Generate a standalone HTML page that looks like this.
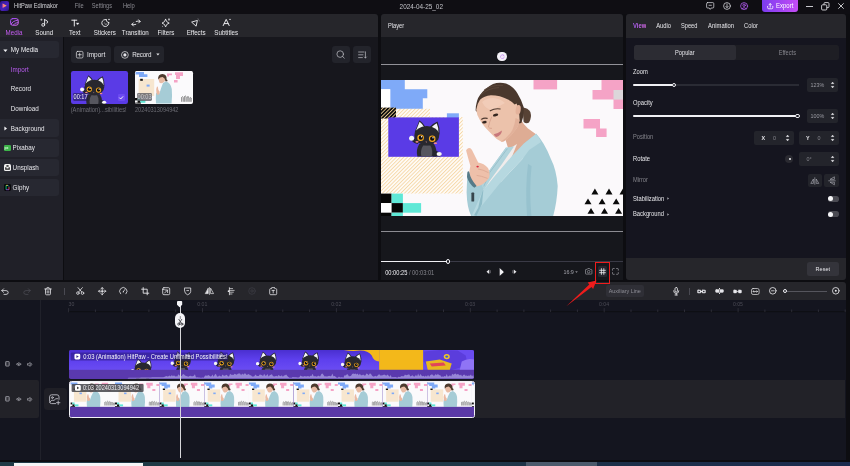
<!DOCTYPE html>
<html><head><meta charset="utf-8">
<style>
*{margin:0;padding:0;box-sizing:border-box}
html,body{width:850px;height:466px;overflow:hidden;background:#0d0d11}
body{position:relative;font-family:"Liberation Sans","DejaVu Sans",sans-serif;font-size:6.5px;color:#e8e8ec;line-height:1}
.a{position:absolute}
.t{position:absolute;white-space:nowrap;line-height:8px;height:8px;transform:scaleY(1.13);transform-origin:50% 72%}
.g{color:#8b8b92}
.btn{position:absolute;background:#23242b;border-radius:3px}
svg{position:absolute;overflow:visible}
/* title */
#title{left:0;top:0;width:850px;height:14px;background:#0f0e13}
/* toolbar */
#tb{left:0;top:14px;width:378px;height:23px;background:#26262b;border-radius:0 3px 0 0}
.tbl{position:absolute;top:28.5px;width:40px;text-align:center;font-size:6.2px;line-height:8px;color:#e8e8ec;transform:scaleY(1.14);transform-origin:50% 75%}
/* sidebar */
#side{left:0;top:37px;width:63px;height:242.8px;background:#202028}
.si{position:absolute;left:0;width:58.9px;height:17.6px;background:#272831;border-radius:0 3px 3px 0}
/* media */
#media{left:64px;top:37px;width:314px;height:242.8px;background:#17171d}
/* player */
#ph{left:381px;top:14px;width:242px;height:23.4px;background:#26262b;border-radius:3px 3px 0 0}
#pb{left:381px;top:37.4px;width:242px;height:242.4px;background:#16171c}
/* right */
#rh{left:626px;top:14px;width:220px;height:23.8px;background:#26262b;border-radius:3px 3px 0 0}
#rb{left:626px;top:37.8px;width:220px;height:220.4px;background:#15151f}
#rf{left:626px;top:258px;width:220px;height:21.8px;background:#26262b;border-radius:0 0 3px 3px}
.box{position:absolute;background:#23242b;border-radius:2px}
/* timeline */
#tt{left:0;top:281.7px;width:845.5px;height:17.9px;background:#26262b;border-radius:0 3px 0 0}
#tl{left:0;top:299.5px;width:846px;height:160.2px;background:#14151f}
#tlc{left:0;top:299.5px;width:40.6px;height:160.2px;background:#14151f;border-right:0.8px solid #20212a}
</style></head><body>
<div id="wrap" style="position:absolute;left:0;top:0;width:850px;height:466px;will-change:transform">
<svg width="0" height="0" style="left:0;top:0">
<defs>
<pattern id="hatch" width="2.6" height="2.6" patternUnits="userSpaceOnUse" patternTransform="rotate(-45)"><rect width="2.6" height="2.6" fill="#fffcf8"/><rect width="2.6" height="0.95" fill="#f5d8a8"/></pattern>
<pattern id="hatchb" width="2.6" height="2.6" patternUnits="userSpaceOnUse" patternTransform="rotate(-45)"><rect width="2.6" height="2.6" fill="#0a0a0a"/><rect width="2.6" height="0.9" fill="#e8c88e"/></pattern>
<symbol id="cat" viewBox="0 0 34 37">
<path d="M5.6 12.4 L10.4 0.2 Q14.4 2.8 16.8 7.4 Z" fill="#25262e"/><path d="M7 10.8 L10.6 1.8 Q13.4 4 15 7 Z" fill="#f4f4f6"/>
<path d="M20.2 7.4 Q24.4 3.2 28.5 1.6 Q31.2 8 30.6 14.8 Z" fill="#25262e"/><path d="M22.2 7.6 Q25.2 4.4 27.7 3.2 Q29.8 8 29.4 12.8 Z" fill="#f4f4f6"/>
<path d="M9 24 Q4.6 23.4 2.2 20 L4.4 17.6 Q6.6 20.4 9.6 20.8 Z" fill="#25262e"/>
<circle cx="2.6" cy="18.2" r="2.5" fill="#f6f6f8"/>
<path d="M8.4 36.6 Q6.6 30 10.2 24 L25 24 Q28.6 30 27.2 36.6 Z" fill="#2a2a30"/>
<path d="M12.4 36.6 Q11 30 14.2 25.4 L21.4 25.4 Q24.2 30 22.6 36.6 Z" fill="#56565e"/>
<path d="M24 31 Q29 30 32.6 35 L31 36.6 L24 36.6 Z" fill="#25262e"/>
<ellipse cx="30.2" cy="34" rx="2.6" ry="1.9" fill="#f6f6f8"/>
<ellipse cx="17.8" cy="15.6" rx="12.4" ry="9.6" fill="#28282e"/>
<circle cx="11.6" cy="17.8" r="3.3" fill="#f4a81c"/><circle cx="11.8" cy="17.7" r="2.1" fill="#0c0c10"/><circle cx="12.6" cy="16.8" r="0.7" fill="#fff"/>
<circle cx="23.2" cy="18.8" r="3.3" fill="#f4a81c"/><circle cx="23.2" cy="18.7" r="2.1" fill="#0c0c10"/><circle cx="24" cy="17.8" r="0.7" fill="#fff"/>
<ellipse cx="8" cy="21.8" rx="1.6" ry="0.9" fill="#f08a8a"/><ellipse cx="26.4" cy="23.2" rx="1.6" ry="0.9" fill="#f08a8a"/>
<path d="M16.6 21.6 L18 21.8 L17.2 22.7 Z" fill="#f0a0a0"/>
</symbol>
<symbol id="scene" viewBox="0 0 242 136" preserveAspectRatio="none">
<rect width="242" height="136" fill="#fbf9fb"/>
<path d="M0 0 H23.8 V9.3 H46.3 V18.3 H41.8 V31.8 H9.2 V9.3 H0 Z" fill="#7faaf8"/>
<rect x="0" y="9.3" width="9.2" height="18.4" fill="#ffffff"/>
<path d="M0 28.8 H49 V37 H81.8 V113.6 H0 Z" fill="url(#hatch)"/>
<rect x="0" y="27.6" width="15" height="11" fill="url(#hatchb)"/>
<rect x="65.9" y="33.3" width="12" height="5" fill="#7faaf8"/>
<rect x="7.3" y="37.4" width="70.6" height="39.4" fill="#5a3be6"/>
<use href="#cat" x="28" y="40" width="34" height="37"/>
<rect x="0" y="113.6" width="10.6" height="9.5" fill="#060606"/><rect x="10.6" y="113.6" width="11.3" height="9.5" fill="#5fe8d6"/>
<rect x="0" y="123.1" width="10.6" height="9.6" fill="#ffffff"/><rect x="10.6" y="123.1" width="11.3" height="9.6" fill="#060606"/><rect x="21.9" y="123.1" width="18.2" height="9.6" fill="#5fe8d6"/>
<rect x="0" y="132.7" width="10.6" height="3.3" fill="#060606"/><rect x="10.6" y="132.7" width="11.3" height="3.3" fill="#5fe8d6"/>
<rect x="152.5" y="0" width="23.6" height="9.4" fill="#f5a3c6"/>
<path d="M220.5 0 H242 V28.9 H232.5 V19.6 H211.5 V10 H220.5 Z" fill="#f5a3c6"/><rect x="232.5" y="10" width="9.5" height="9.6" fill="#dcd6da"/>
<path d="M202.5 39.1 H219 V48.4 H225.6 V57.1 H215.1 V48.4 H202.5 Z" fill="#f5a3c6"/>
<g fill="#0a0a0a"><path d="M210.4 114.4 L213.9 108.4 L217.4 114.4 Z M224.5 114.4 L228 108.4 L231.5 114.4 Z M238.5 114.4 L242 108.4 V114.4 Z"/><path d="M203.5 124.2 L207 118.4 L210.5 124.2 Z M217.6 124.2 L221.1 118.4 L224.6 124.2 Z M231.7 124.2 L235.2 118.4 L238.7 124.2 Z"/><path d="M206.5 133.8 L210 127.9 L213.5 133.8 Z M220 133.8 L223.5 127.9 L227 133.8 Z M234.1 133.8 L237.6 127.9 L241.1 133.8 Z"/></g>
<!-- woman -->
<path d="M141.6 27.4 Q147 27.8 149.4 32 Q151 37.6 148 42.4 Q145.6 44.2 142.6 42 Z" fill="#574235"/>
<path d="M124 58 L136 44 L139 38 Q142 44 147 48.4 L155.4 54.4 L143 66 L131 80 L127 68 Z" fill="#deac94"/>
<path d="M94.6 30.4 Q95 20 99 15 Q104 8 112 4 Q118 1.6 125 3.4 Q132 6 136.5 13.5 Q140.6 20 142.8 27.4 L142.4 36 L140.4 43 L134 44 L120 40 L100 36 Z" fill="#4a382d"/>
<path d="M95.2 29.8 Q96 24 99 19.8 Q103 15.8 110 15.2 Q119 15.2 127 19.6 Q131 21.8 133.6 24.4 L135.6 23.4 Q138.2 29 138.6 40 Q137.6 47 134 50.4 Q130 56 125.4 59.4 Q122.4 62.2 120 61.6 Q116 60 113 56.6 L106.6 50 Q101 44 98.6 39.4 Q95.6 34.6 95.2 29.8 Z" fill="#ecc2ab"/>
<path d="M101 22 Q106 17.6 113 18 Q120 19 124 23 Q118 26 112 30 Q105 30 101 22 Z" fill="#f3d0bd" opacity="0.7"/>
<ellipse cx="137.2" cy="29.8" rx="2.5" ry="4.8" fill="#e4b29b" transform="rotate(8 137.2 29.8)"/>
<path d="M134 50.4 Q130 56 125.4 59.4 Q122.4 62.2 120 61.6 Q127 57.6 131.4 50 Q134 44 134.6 38 L138.6 40 Q137.6 47 134 50.4 Z" fill="#e2b19a"/>
<path d="M112.8 54.2 Q117 53.6 121 50.6 Q120.4 55.6 115.6 57 Q113.6 56.6 112.8 54.2 Z" fill="#c8777b"/>
<path d="M100.6 39.2 Q103 37.6 106.2 38.4 M109.2 30.8 Q114 28 119.2 29" stroke="#4e3a30" stroke-width="1.1" fill="none" stroke-linecap="round"/>
<ellipse cx="103.4" cy="42.2" rx="2.3" ry="1.3" fill="#33251f" transform="rotate(-8 103.4 42.2)"/>
<ellipse cx="114.6" cy="35" rx="2.7" ry="1.4" fill="#33251f" transform="rotate(-14 114.6 35)"/>
<path d="M110.6 37 Q108.4 42 107.4 47 Q108.4 48.8 110.6 48.4" stroke="#d7a38d" stroke-width="0.9" fill="none" stroke-linecap="round"/>
<path d="M103 10 Q111 4.6 122 5.4 M99.6 15 Q107 8 118 7.6" stroke="#5e4a3c" stroke-width="0.8" fill="none"/>
<path d="M128 69 L136 64 L128 84 L108 108 L103.6 108 L108 92 Z" fill="#f1eceb"/>
<path d="M155.2 53.8 Q163 62 169.7 78.4 Q175.6 90 176.7 106 Q176 122 172.2 136 L90.2 136 Q86 128 85.6 112.3 L86.4 92.3 L89.4 103 L100.3 104.6 L107.2 92 L125 67.5 L128.4 69.4 L108.4 93.6 L101.8 110.8 L104 112 L120.3 101.5 L141.9 78.4 L143.6 70 L142.4 64.1 Z" fill="#a5ccd6"/>
<path d="M142.4 64.1 L155.2 53.8 Q158 57 160 62 L148.1 70 L141.9 78.4 L120.3 101.5 L94.1 134 L93 136 L90.6 136 L101.8 110.8 L113 97 L131 76 Z" fill="#b6d8e0"/>
<path d="M125 67.5 L133 66.4 L121 84 L108.6 101 L103 110 L100.3 104.6 L107.2 92 Z" fill="#b1d4dc"/><path d="M126.4 68.6 L108.6 92.6 L102.8 106.4" stroke="#8fb9c5" stroke-width="0.7" fill="none"/>
<path d="M147 84 Q144 108 146 136 L150.4 136 Q148 110 150.6 86 Z" fill="#97c2ce"/>
<path d="M102.6 107.7 Q99 118 97.2 127.8 L93.3 134.7 L95.4 136 L101 124 Z" fill="#8fbcc8"/>
<path d="M87.1 68.3 Q89.4 67.2 91 70 L97.2 82.6 Q103 83.6 107 88 Q109.6 93 108 98 Q103 105 95.6 106.6 Q91 103 88.7 96.9 Q87.6 91 89.4 86.1 Q87.6 80 85.1 70.6 Q85.6 69 87.1 68.3 Z" fill="#eec0aa"/>
<path d="M97 89 Q102 89.6 107.4 92.6 M95.6 95.4 Q100 95.8 106.6 98.4" stroke="#d9a48e" stroke-width="0.7" fill="none"/>
<ellipse cx="96.6" cy="86.6" rx="1.2" ry="0.9" fill="#d9263c"/>
<path d="M86.4 92.3 Q87.4 90 88.4 92.6 Q89.4 99 95.6 106.1 L93.4 107.8 Q88 104 86 97 Z" fill="#567a88"/>
<rect x="90.4" y="112.6" width="2.8" height="9" rx="0.7" fill="#37454c"/>
</symbol>
</defs></svg>

<!-- ================= TITLE BAR ================= -->
<div class="a" id="title"></div>
<div class="a" style="left:0.3px;top:0.6px;width:9px;height:10.4px;border-radius:2px;background:linear-gradient(135deg,#2c148a,#4a22c0 55%,#2a1580)"></div>
<svg style="left:2.2px;top:2.6px" width="5.6" height="5.6" viewBox="0 0 6 6"><path d="M0.8 0.6 L5 3 L0.8 5.2 Z" fill="#ffb648"/><path d="M0.8 0.6 L3 3 L0.8 5.2 Z" fill="#ff5fa8"/></svg>
<div class="t" style="left:14px;top:2.3px;font-size:5.72px;color:#d4d4d8">HitPaw Edimakor</div>
<div class="t g" style="left:74.8px;top:2.3px;font-size:5.7px;letter-spacing:-0.1px">File</div>
<div class="t g" style="left:91.8px;top:2.3px;font-size:5.6px">Settings</div>
<div class="t g" style="left:122.9px;top:2.3px;font-size:5.8px">Help</div>
<div class="t" style="left:399.6px;top:2.7px;font-size:6.4px;color:#c4c4ca">2024-04-25_02</div>

<!-- title right -->
<svg style="left:705.6px;top:2.2px" width="8.4" height="8.4" viewBox="0 0 8.4 8.4" fill="none" stroke="#d8d8de" stroke-width="0.75" stroke-linecap="round" stroke-linejoin="round"><path d="M1.6 0.6 H6.8 Q7.8 0.6 7.8 1.6 V5 Q7.8 6 6.8 6 H5.2 L4.2 7.4 L3.2 6 H1.6 Q0.6 6 0.6 5 V1.6 Q0.6 0.6 1.6 0.6 Z"/><path d="M3 3.3 H5.4"/></svg>
<svg style="left:722.7px;top:2.2px" width="8" height="8" viewBox="0 0 8 8" fill="none" stroke="#d8d8de" stroke-width="0.75" stroke-linecap="round" stroke-linejoin="round"><circle cx="4" cy="4" r="3.4"/><path d="M4 2 V5.4 M2.8 4.4 L4 5.6 L5.2 4.4"/></svg>
<svg style="left:739.5px;top:2.1px" width="8.2" height="8.2" viewBox="0 0 8.2 8.2" fill="none" stroke="#b35cf0" stroke-width="0.8" stroke-linecap="round" stroke-linejoin="round"><circle cx="4.1" cy="4.1" r="3.5"/><circle cx="4.1" cy="3.3" r="1.2"/><path d="M1.9 6.6 Q4.1 4.4 6.3 6.6"/></svg>
<div class="a" style="left:761.5px;top:0;width:36.8px;height:12.3px;border-radius:0 0 3px 3px;background:linear-gradient(90deg,#7b3cf0,#c44cf5)"></div>
<svg style="left:767.4px;top:3px" width="6.4" height="6.4" viewBox="0 0 6.4 6.4" fill="none" stroke="#fff" stroke-width="0.8" stroke-linecap="round" stroke-linejoin="round"><path d="M3.2 0.7 V4.2 M1.9 1.9 L3.2 0.6 L4.5 1.9"/><path d="M0.6 3.4 V4.6 Q0.6 5.8 1.8 5.8 H4.6 Q5.8 5.8 5.8 4.6 V3.4"/></svg>
<div class="t" style="left:776px;top:2.4px;font-size:6px;color:#fff">Export</div>
<div class="a" style="left:806px;top:5.8px;width:7px;height:1px;background:#c8c8ce"></div>
<svg style="left:821.4px;top:1.8px" width="8.6" height="8.6" viewBox="0 0 8.6 8.6" fill="none" stroke="#e6e6ea" stroke-width="0.85" stroke-linejoin="round"><rect x="0.6" y="2.8" width="5.2" height="5.2" rx="1"/><path d="M3 2.8 V1.6 Q3 0.6 4 0.6 H7 Q8 0.6 8 1.6 V4.6 Q8 5.6 7 5.6 H5.8"/></svg>
<svg style="left:838.2px;top:3.2px" width="6" height="6" viewBox="0 0 6 6" fill="none" stroke="#e6e6ea" stroke-width="0.85" stroke-linecap="round"><path d="M0.6 0.6 L5.4 5.4 M5.4 0.6 L0.6 5.4"/></svg>
<!-- ================= TOOLBAR ================= -->
<div class="a" id="tb"></div>
<!-- toolbar icons -->
<svg style="left:9.6px;top:18.4px" width="9" height="8" viewBox="0 0 9 8" fill="none" stroke-linecap="round" stroke-linejoin="round"><defs><linearGradient id="mg" x1="0" y1="0" x2="1" y2="1"><stop offset="0" stop-color="#a348ff"/><stop offset="1" stop-color="#e070f5"/></linearGradient></defs><path d="M2.6 0.6 H6.2 Q8.2 0.6 8.2 2.6 V5.2 Q8.2 7.2 6.2 7.2 H2.6 Q0.6 7.2 0.6 5.2 V2.6 Q0.6 0.6 2.6 0.6 Z" stroke="url(#mg)" stroke-width="1"/><path d="M1.1 6.3 Q2.2 2.9 7.9 2.1" stroke="url(#mg)" stroke-width="0.95"/><path d="M3.3 6.9 Q4.4 4.7 7.9 4.5" stroke="url(#mg)" stroke-width="0.85"/></svg>
<svg style="left:40px;top:18px" width="9" height="9" viewBox="0 0 9 9" fill="none" stroke="#f2f2f5" stroke-width="0.9" stroke-linecap="round" stroke-linejoin="round"><circle cx="3.2" cy="6.9" r="1.4"/><path d="M4.6 6.9 V1.1 Q5.2 2.6 7.2 2.9 Q8.4 3.6 7 5.2"/><path d="M1.4 1 v1.4 M0.7 1.7 h1.4" stroke-width="0.55"/></svg>
<svg style="left:70.5px;top:18.5px" width="9" height="8" viewBox="0 0 9 8" fill="none" stroke="#f2f2f5" stroke-width="0.95" stroke-linecap="round" stroke-linejoin="round"><path d="M0.8 1.2 H5.8 M3.3 1.2 V7"/><path d="M5.4 4 H8 L6.7 5.7 Z" fill="#f2f2f5" stroke-width="0.3"/></svg>
<svg style="left:100.5px;top:18px" width="9.5" height="9" viewBox="0 0 9.5 9" fill="none" stroke="#f2f2f5" stroke-width="0.9" stroke-linecap="round" stroke-linejoin="round"><path d="M5.2 1.6 A3.5 3.5 0 1 0 7.8 4.6"/><path d="M7.8 4.6 Q6 4.4 5.6 3 Q5.3 2.2 5.2 1.6"/><circle cx="3.3" cy="4.9" r="0.45" fill="#f2f2f5" stroke="none"/><path d="M4.2 6.2 Q5 6.8 5.9 6" stroke-width="0.6"/><circle cx="8" cy="1.5" r="0.75" fill="#f2f2f5" stroke="none"/></svg>
<svg style="left:130.5px;top:18.5px" width="10" height="8" viewBox="0 0 10 8" fill="none" stroke="#f2f2f5" stroke-width="0.9" stroke-linecap="round" stroke-linejoin="round"><path d="M5.2 2.4 Q7.2 1.6 9 2.4 M7.6 0.8 L9.2 2.4 L7.6 4"/><path d="M4.8 5.4 Q2.8 6.2 1 5.4 M2.4 3.8 L0.8 5.4 L2.4 7"/></svg>
<svg style="left:161px;top:17.5px" width="10" height="9.5" viewBox="0 0 10 9.5" fill="none" stroke="#f2f2f5" stroke-width="0.85" stroke-linecap="round" stroke-linejoin="round"><path d="M4.6 1.4 Q5.2 4.4 8.2 5.1 Q5.2 5.8 4.6 8.9 Q4 5.8 1 5.1 Q4 4.4 4.6 1.4 Z"/><path d="M8 0.6 Q8.1 1.5 9 1.6 Q8.1 1.7 8 2.6 Q7.9 1.7 7 1.6 Q7.9 1.5 8 0.6 Z" fill="#f2f2f5" stroke-width="0.3"/><circle cx="1.6" cy="8.2" r="0.45" fill="#f2f2f5" stroke="none"/></svg>
<svg style="left:191px;top:18px" width="9.5" height="9" viewBox="0 0 9.5 9" fill="none" stroke="#f2f2f5" stroke-width="0.9" stroke-linecap="round" stroke-linejoin="round"><path d="M1 4 L6.4 2.4 L5.2 7.8 Z"/><path d="M7 0.9 L7.6 1.3 M8.1 2.4 L8.4 3" stroke-width="0.5" stroke="#b0b0b6"/></svg>
<svg style="left:221.5px;top:18px" width="10" height="9" viewBox="0 0 10 9" fill="none" stroke="#f2f2f5" stroke-width="0.95" stroke-linecap="round" stroke-linejoin="round"><path d="M1.2 7.6 L4.2 1.4 L7.2 7.6 M2.3 5.6 H6.1"/><circle cx="8" cy="1.4" r="0.7" fill="#f2f2f5" stroke="none"/></svg>
<div class="tbl" style="left:-6px;color:#c45cf2">Media</div>
<div class="tbl" style="left:24.3px">Sound</div>
<div class="tbl" style="left:54.8px">Text</div>
<div class="tbl" style="left:84.8px">Stickers</div>
<div class="tbl" style="left:115.3px">Transition</div>
<div class="tbl" style="left:146px">Filters</div>
<div class="tbl" style="left:176.1px">Effects</div>
<div class="tbl" style="left:206.2px">Subtitles</div>

<!-- ================= SIDEBAR ================= -->
<div class="a" id="side"></div>
<div class="si" style="top:40.7px"></div>
<div class="si" style="top:119.4px"></div>
<div class="si" style="top:139.1px"></div>
<div class="si" style="top:158.9px"></div>
<div class="si" style="top:178.7px"></div>
<svg style="left:3.3px;top:48.6px" width="5" height="3.5" viewBox="0 0 5 3.5"><path d="M0.3 0.4 H4.5 L2.4 3 Z" fill="#f2f2f5"/></svg>
<div class="t" style="left:10.8px;top:46px;font-size:6.3px;color:#f0f0f4">My Media</div>
<div class="t" style="left:10.8px;top:65.6px;font-size:6.3px;color:#b95cf0">Import</div>
<div class="t" style="left:10.8px;top:85px;font-size:6.3px;color:#e6e6ea">Record</div>
<div class="t" style="left:10.8px;top:104.6px;font-size:6.3px;color:#e6e6ea">Download</div>
<svg style="left:4.2px;top:125.9px" width="3.5" height="5" viewBox="0 0 3.5 5"><path d="M0.4 0.4 V4.6 L3 2.5 Z" fill="#f2f2f5"/></svg>
<div class="t" style="left:10.8px;top:124.7px;font-size:6.3px;color:#e6e6ea">Background</div>
<div class="a" style="left:3.6px;top:144.5px;width:7px;height:6.6px;border-radius:1.2px;background:#3db54a"></div>
<div class="t" style="left:4.4px;top:144.4px;font-size:3.4px;font-weight:bold;color:#d8f5dc">px</div>
<div class="t" style="left:12.6px;top:144.3px;font-size:6.3px;color:#e6e6ea">Pixabay</div>
<div class="a" style="left:3.6px;top:164.3px;width:7px;height:6.8px;border-radius:1.6px;background:#f2f2f2"></div>
<svg style="left:3.6px;top:164.3px" width="7" height="6.8" viewBox="0 0 7 6.8"><rect x="2.4" y="1.2" width="2.2" height="1.5" fill="#222"/><path d="M1.2 3.3 H2.4 V4.5 H4.6 V3.3 H5.8 V5.7 H1.2 Z" fill="#222"/></svg>
<div class="t" style="left:12.6px;top:164px;font-size:6.3px;color:#e6e6ea">Unsplash</div>
<div class="a" style="left:3.6px;top:184px;width:7px;height:7px;border-radius:1.4px;background:#08080a"></div>
<svg style="left:3.6px;top:184px" width="7" height="7" viewBox="0 0 7 7" fill="none" stroke-width="0.8"><path d="M2.1 1.4 V5.7" stroke="#00e08a"/><path d="M2.1 5.7 H5" stroke="#9a4dff"/><path d="M5 5.7 V3" stroke="#ff5a6a"/><path d="M2.1 1.4 H4" stroke="#ffe84d"/><path d="M4 1.4 L5 2.6" stroke="#27c4ff"/></svg>
<div class="t" style="left:12.6px;top:183.9px;font-size:6.3px;color:#e6e6ea">Giphy</div>

<!-- ================= MEDIA ================= -->
<div class="a" id="media"></div>
<div class="btn" style="left:70.7px;top:45.5px;width:40px;height:17.5px"></div>
<svg style="left:75.6px;top:51px" width="7.4" height="7.4" viewBox="0 0 7.4 7.4" fill="none" stroke="#e6e6ea" stroke-width="0.7" stroke-linecap="round"><rect x="0.4" y="0.4" width="6.6" height="6.6" rx="1.3"/><path d="M3.7 2.1 V5.3 M2.1 3.7 H5.3"/></svg>
<div class="t" style="left:86.9px;top:50.8px;font-size:6.5px;color:#e6e6ea">Import</div>
<div class="btn" style="left:114.2px;top:45.5px;width:50px;height:17.5px"></div>
<svg style="left:121.2px;top:50.8px" width="7.8" height="7.8" viewBox="0 0 7.8 7.8"><circle cx="3.9" cy="3.9" r="3.4" fill="none" stroke="#e6e6ea" stroke-width="0.7"/><circle cx="3.9" cy="3.9" r="1.6" fill="#e6e6ea"/></svg>
<div class="t" style="left:132.2px;top:50.8px;font-size:6.3px;letter-spacing:-0.2px;color:#e6e6ea">Record</div>
<svg style="left:155.8px;top:53.4px" width="4" height="3" viewBox="0 0 4 3"><path d="M0.3 0.4 H3.5 L1.9 2.4 Z" fill="#e6e6ea"/></svg>
<div class="btn" style="left:332px;top:45.5px;width:17.6px;height:17.5px"></div>
<svg style="left:336.4px;top:50px" width="9" height="9" viewBox="0 0 9 9" fill="none" stroke="#b9b9c0" stroke-width="0.75" stroke-linecap="round"><circle cx="4.2" cy="4.1" r="3.3"/><path d="M6.7 6.5 L8.2 8.2"/></svg>
<div class="btn" style="left:353.3px;top:45.5px;width:18px;height:17.5px"></div>
<svg style="left:358px;top:50.6px" width="9" height="8" viewBox="0 0 9 8" fill="none" stroke="#b9b9c0" stroke-width="0.75" stroke-linecap="round" stroke-linejoin="round"><path d="M0.6 1 H6 M0.6 3.8 H5 M0.6 6.6 H4.4"/><path d="M7.4 0.8 V7 M6.4 6 L7.4 7 L8.4 6"/></svg>
<!-- thumbs -->
<div class="a" style="left:70.7px;top:71.3px;width:57.4px;height:32.6px;border-radius:2.2px;background:#5a3be6;overflow:hidden">
<svg style="left:9.1px;top:4.2px" width="27.2" height="29.6" viewBox="0 0 34 37"><use href="#cat" width="34" height="37"/></svg></div>
<div class="a" style="left:72.6px;top:93.3px;width:15px;height:7.8px;border-radius:1.4px;background:rgba(30,24,70,.55)"></div>
<div class="t" style="left:73.6px;top:93.4px;font-size:5.6px;color:#eeeef5">00:17</div>
<div class="a" style="left:117.9px;top:94.4px;width:7.2px;height:6.3px;border-radius:1.2px;background:#6c4af2"></div>
<svg style="left:119.4px;top:95.8px" width="4.4" height="3.6" viewBox="0 0 4.4 3.6" fill="none" stroke="#fff" stroke-width="0.9" stroke-linecap="round" stroke-linejoin="round"><path d="M0.6 1.9 L1.7 3 L3.8 0.7"/></svg>
<div class="a" style="left:135px;top:71.3px;width:57.5px;height:32.6px;border-radius:2.2px;background:#fff;overflow:hidden">
<svg style="left:0;top:0" width="57.5" height="32.6" viewBox="0 0 57.5 32.6">
<rect width="57.5" height="32.6" fill="#fbfafc"/>
<path d="M0.5 1 H9 V3.2 H12.4 V6 H4 V3.4 H0.5 Z" fill="#7faaf8"/>
<path d="M32 2.4 H37 V4.2 H34 V5.6 H32 Z M40 1.2 H48 V5 H45 V8 H41 V4 H40 Z M39 9 H42.6 V11.6 H39 Z" fill="#f5a3c6"/>
<rect x="3.6" y="8" width="15.6" height="17" fill="#f7e6cf"/>
<rect x="5.2" y="7.8" width="2.6" height="2" fill="#111"/>
<rect x="11.6" y="13.6" width="3" height="2" fill="#7faaf8"/>
<path d="M23.4 8 Q23.6 3.6 27.6 3.8 Q31.2 4.4 30.8 9 L29 11 Q26 13.4 24.4 11.6 Z" fill="#e8bba4"/>
<path d="M23.2 8.4 Q22.6 3.4 27.4 3 Q32 3.2 31.6 8.4 Q33 8.6 32.4 10.2 L30.6 10.4 Q30 7 27.6 6 Q25 6 23.2 8.4 Z" fill="#4d3a2e"/>
<path d="M28 12 L31 10.4 Q36 12 36.8 18 Q37.4 25 36.6 32.6 L21 32.6 Q20.6 26 21 22 L24.4 22.6 Q26 17 28 12 Z" fill="#a6ccd6"/>
<path d="M21.4 22 Q20.6 18 22 15.6 L22.8 15.8 L23.4 19 Q25.2 20 24.6 22.8 Q23.4 24.4 22 23.6 Z" fill="#eab9a2"/>
<rect x="0" y="27" width="2.6" height="2.4" fill="#111"/><rect x="2.6" y="27" width="2.8" height="2.4" fill="#5fe8d6"/><rect x="2.6" y="29.4" width="2.8" height="2.4" fill="#111"/><rect x="5.4" y="29.4" width="5" height="2.4" fill="#5fe8d6"/><rect x="0" y="31.6" width="6" height="1" fill="#111"/>
<g stroke="#222" stroke-width="0.5" fill="none"><path d="M46.6 30.8 V26.4 Q47.4 25 48.2 26.4 V30.8 M49.4 30.8 V25.6 Q50.2 24.2 51 25.6 V30.8 M52.2 30.8 V26 Q53 24.6 53.8 26 V30.8 M55 30.8 V27 Q55.6 26 56.2 27 V30.8"/></g>
</svg></div>
<div class="a" style="left:136.6px;top:93.3px;width:15px;height:7.8px;border-radius:1.4px;background:rgba(90,90,96,.78)"></div>
<div class="t" style="left:137.6px;top:93.4px;font-size:5.6px;color:#c8c8cc">00:03</div>
<div class="t" style="left:70.7px;top:106.2px;font-size:5.75px;color:#6c6c74">(Animation)...sibilities!</div>
<div class="t" style="left:135px;top:106.2px;font-size:5.58px;color:#6c6c74">20240313094942</div>

<!-- ================= PLAYER ================= -->
<div class="a" id="ph"></div>
<div class="a" id="pb"></div>
<div class="t" style="left:388px;top:21.6px;font-size:5.7px;color:#e6e6ea">Player</div>
<div class="a" style="left:381px;top:64.1px;width:242px;height:1px;background:#929298"></div>
<div class="a" style="left:497.4px;top:52px;width:9.4px;height:9.4px;border-radius:50%;background:#f4f2f8"></div>
<svg style="left:499.6px;top:54.2px" width="5" height="5" viewBox="0 0 5 5" fill="none" stroke="#c78af2" stroke-width="0.7" stroke-linecap="round"><path d="M3.9 1.5 A1.9 1.9 0 1 0 4.3 3"/><path d="M3 0.5 L4 1.5 L2.8 1.9" stroke-width="0.5"/></svg>
<svg style="left:381px;top:80px" width="242" height="136" viewBox="0 0 242 136"><use href="#scene" width="242" height="136"/></svg>
<div class="a" style="left:381px;top:231.4px;width:242px;height:1px;background:#8c8c92"></div>
<div class="a" style="left:381px;top:260.9px;width:242px;height:1.4px;background:#3a3a46"></div>
<div class="a" style="left:381px;top:260.8px;width:66px;height:1.7px;background:#f0f0f4"></div>
<div class="a" style="left:446.2px;top:259.4px;width:4.2px;height:4.2px;border-radius:50%;background:#16171d;border:0.9px solid #f0f0f4"></div>
<div class="t" style="left:385.2px;top:268.6px;font-size:5.7px;color:#f0f0f4">00:00:25 <span style="color:#85858c">/ 00:03:01</span></div>
<svg style="left:486.4px;top:269.2px" width="5" height="5.4" viewBox="0 0 5 5.4"><path d="M3.2 0.5 V4.9 L0.5 2.7 Z" fill="#e6e6ea"/><rect x="3.7" y="1.2" width="0.8" height="3" fill="#8a8a90"/></svg>
<svg style="left:499.4px;top:268px" width="5" height="8" viewBox="0 0 5 8"><path d="M0.7 0.6 Q0.7 0.2 1.1 0.4 L4.4 3.6 Q4.7 4 4.4 4.4 L1.1 7.6 Q0.7 7.8 0.7 7.4 Z" fill="#f2f2f5"/></svg>
<svg style="left:512.4px;top:269.2px" width="5" height="5.4" viewBox="0 0 5 5.4"><path d="M1.8 0.5 V4.9 L4.5 2.7 Z" fill="#e6e6ea"/><rect x="0.5" y="1.2" width="0.8" height="3" fill="#8a8a90"/></svg>
<div class="t" style="left:563.6px;top:268.4px;font-size:5.4px;color:#a0a0a8;letter-spacing:-0.1px">16:9</div>
<svg style="left:575px;top:271.4px" width="3" height="2.4" viewBox="0 0 3 2.4"><path d="M0.2 0.3 H2.8 L1.5 2 Z" fill="#8a8a90"/></svg>
<svg style="left:584.6px;top:268.4px" width="7.4" height="6.6" viewBox="0 0 7.4 6.6" fill="none" stroke="#9a9aa2" stroke-width="0.7" stroke-linejoin="round"><path d="M0.5 2 Q0.5 1.4 1.1 1.4 H2.2 L2.8 0.5 H4.6 L5.2 1.4 H6.3 Q6.9 1.4 6.9 2 V5.5 Q6.9 6.1 6.3 6.1 H1.1 Q0.5 6.1 0.5 5.5 Z"/><circle cx="3.7" cy="3.7" r="1.3"/></svg>
<div class="a" style="left:597.8px;top:266.4px;width:8.8px;height:11px;border-radius:1.5px;background:#26272f"></div>
<svg style="left:599.2px;top:268.2px" width="7" height="7" viewBox="0 0 7 7" fill="none" stroke="#f2f2f5" stroke-width="0.8" stroke-linecap="round"><path d="M2.4 0.6 V6.4 M4.8 0.6 V6.4 M0.6 2.3 H6.4 M0.6 4.7 H6.4"/></svg>
<svg style="left:612px;top:268.4px" width="6.8" height="6.8" viewBox="0 0 6.8 6.8" fill="none" stroke="#a6a6ae" stroke-width="0.7" stroke-linecap="round" stroke-linejoin="round"><path d="M0.5 2.2 V1.2 Q0.5 0.5 1.2 0.5 H2.2 M4.6 0.5 H5.6 Q6.3 0.5 6.3 1.2 V2.2 M6.3 4.6 V5.6 Q6.3 6.3 5.6 6.3 H4.6 M2.2 6.3 H1.2 Q0.5 6.3 0.5 5.6 V4.6"/></svg>

<!-- ================= RIGHT PANEL ================= -->
<div class="a" id="rh"></div>
<div class="a" id="rb"></div>
<div class="a" id="rf"></div>
<div class="t" style="left:633px;top:21.9px;font-size:5.9px;font-weight:bold;color:#c060f0;background:linear-gradient(90deg,#a85cf5,#e06cf0);-webkit-background-clip:text;background-clip:text;-webkit-text-fill-color:transparent">View</div>
<div class="t" style="left:656.2px;top:21.9px;font-size:5.8px;color:#e6e6ea">Audio</div>
<div class="t" style="left:681px;top:21.9px;font-size:5.7px;color:#e6e6ea">Speed</div>
<div class="t" style="left:708.1px;top:21.9px;font-size:5.85px;color:#e6e6ea">Animation</div>
<div class="t" style="left:744px;top:21.9px;font-size:5.8px;color:#e6e6ea">Color</div>
<div class="a" style="left:633.6px;top:45.4px;width:205px;height:14.4px;border-radius:2.5px;background:#1e1e24"></div>
<div class="a" style="left:633.6px;top:45.4px;width:102.6px;height:14.4px;border-radius:2.5px;background:#2c2c33"></div>
<div class="t" style="left:633.6px;top:48.6px;width:102.6px;text-align:center;font-size:5.7px;color:#e6e6ea">Popular</div>
<div class="t" style="left:736.2px;top:48.6px;width:102.4px;text-align:center;font-size:5.7px;color:#85858c">Effects</div>
<div class="t" style="left:633px;top:67.8px;font-size:5.8px;color:#e6e6ea">Zoom</div>
<div class="a" style="left:633px;top:84.1px;width:166.4px;height:1.6px;background:#2a2b34"></div>
<div class="a" style="left:633px;top:84px;width:40px;height:1.8px;border-radius:1px;background:#f0f0f4"></div>
<div class="a" style="left:671.6px;top:82.5px;width:4.8px;height:4.8px;border-radius:50%;background:#15151f;border:1px solid #f0f0f4"></div>
<div class="box" style="left:806.9px;top:78px;width:31.6px;height:13.6px"></div>
<div class="t" style="left:810.6px;top:81.2px;font-size:5.4px;color:#9a9aa2">123%</div>
<div class="t" style="left:633px;top:99.2px;font-size:5.8px;color:#e6e6ea">Opacity</div>
<div class="a" style="left:633px;top:115.2px;width:166.4px;height:1.6px;background:#2a2b34"></div>
<div class="a" style="left:633px;top:115.1px;width:163px;height:1.8px;border-radius:1px;background:#f0f0f4"></div>
<div class="a" style="left:794.8px;top:113.6px;width:4.8px;height:4.8px;border-radius:50%;background:#15151f;border:1px solid #f0f0f4"></div>
<div class="box" style="left:806.9px;top:109.3px;width:31.6px;height:13.6px"></div>
<div class="t" style="left:810.6px;top:112.4px;font-size:5.4px;color:#9a9aa2">100%</div>
<div class="t" style="left:633px;top:133.2px;font-size:5.7px;color:#85858c">Position</div>
<div class="box" style="left:754px;top:130.5px;width:40px;height:14px"></div>
<div class="t" style="left:761.6px;top:134px;font-size:5.4px;font-weight:bold;color:#e6e6ea">X</div>
<div class="t" style="left:773px;top:134px;font-size:5.4px;color:#85858c">0</div>
<div class="box" style="left:798.6px;top:130.5px;width:40px;height:14px"></div>
<div class="t" style="left:806px;top:134px;font-size:5.4px;font-weight:bold;color:#e6e6ea">Y</div>
<div class="t" style="left:817.6px;top:134px;font-size:5.4px;color:#85858c">0</div>
<div class="t" style="left:633px;top:154.8px;font-size:5.8px;color:#e6e6ea">Rotate</div>
<div class="a" style="left:784.6px;top:154.6px;width:8.2px;height:8.2px;border-radius:50%;background:#2a2a31"></div>
<div class="a" style="left:789.2px;top:157.6px;width:2.2px;height:2.2px;border-radius:50%;background:#f0f0f4"></div>
<div class="box" style="left:798.6px;top:152px;width:40px;height:13.6px"></div>
<div class="t" style="left:806.6px;top:154.8px;font-size:5.4px;color:#85858c">0°</div>
<div class="t" style="left:633px;top:176.4px;font-size:5.7px;color:#85858c">Mirror</div>
<div class="box" style="left:807.6px;top:173.6px;width:14.4px;height:13.8px"></div>
<svg style="left:810.2px;top:176.6px" width="9.6" height="8" viewBox="0 0 9.6 8" fill="none" stroke="#b4b4bc" stroke-width="0.6" stroke-linejoin="round"><path d="M4.8 0.3 V7.7"/><path d="M3.4 2 V6.4 H0.8 Z"/><path d="M6.2 2 V6.4 H8.8 Z"/></svg>
<div class="box" style="left:824.4px;top:173.6px;width:14.2px;height:13.8px"></div>
<svg style="left:827.5px;top:175.8px" width="8" height="9.6" viewBox="0 0 8 9.6" fill="none" stroke="#b4b4bc" stroke-width="0.6" stroke-linejoin="round"><path d="M0.3 4.8 H7.7"/><path d="M2 3.4 H6.4 V0.8 Z"/><path d="M2 6.2 H6.4 V8.8 Z"/></svg>
<div class="t" style="left:633px;top:194.8px;font-size:5.8px;color:#e6e6ea">Stabilization</div>
<svg style="left:666.6px;top:197.4px" width="2.4" height="3" viewBox="0 0 2.4 3"><path d="M0.3 0.3 V2.7 L2.1 1.5 Z" fill="#a8a8b0"/></svg>
<div class="a" style="left:828px;top:196px;width:10.6px;height:5.6px;border-radius:2.8px;background:#4a4a52"></div>
<div class="a" style="left:828.2px;top:196.2px;width:5.2px;height:5.2px;border-radius:50%;background:#f6f6f8"></div>
<div class="t" style="left:633px;top:210.2px;font-size:5.8px;color:#e6e6ea">Background</div>
<svg style="left:666.8px;top:212.8px" width="2.4" height="3" viewBox="0 0 2.4 3"><path d="M0.3 0.3 V2.7 L2.1 1.5 Z" fill="#a8a8b0"/></svg>
<div class="a" style="left:828px;top:211.4px;width:10.6px;height:5.6px;border-radius:2.8px;background:#4a4a52"></div>
<div class="a" style="left:828.2px;top:211.6px;width:5.2px;height:5.2px;border-radius:50%;background:#f6f6f8"></div>
<div class="a" style="left:807px;top:262.2px;width:31.6px;height:13.6px;border-radius:2.5px;background:#34343b"></div>
<div class="t" style="left:807px;top:265.2px;width:31.6px;text-align:center;font-size:5.5px;color:#e6e6ea">Reset</div>
<svg style="left:830.8px;top:81.0px" width="3.2" height="8" viewBox="0 0 3.2 8"><path d="M0.2 2.7 L1.6 1 L3 2.7 Z M0.2 5.3 L1.6 7 L3 5.3 Z" fill="#f0f0f4" stroke="#f0f0f4" stroke-width="0.3" stroke-linejoin="round"/></svg>
<svg style="left:830.8px;top:112.2px" width="3.2" height="8" viewBox="0 0 3.2 8"><path d="M0.2 2.7 L1.6 1 L3 2.7 Z M0.2 5.3 L1.6 7 L3 5.3 Z" fill="#f0f0f4" stroke="#f0f0f4" stroke-width="0.3" stroke-linejoin="round"/></svg>
<svg style="left:786.0px;top:133.6px" width="3.2" height="8" viewBox="0 0 3.2 8"><path d="M0.2 2.7 L1.6 1 L3 2.7 Z M0.2 5.3 L1.6 7 L3 5.3 Z" fill="#f0f0f4" stroke="#f0f0f4" stroke-width="0.3" stroke-linejoin="round"/></svg>
<svg style="left:830.8px;top:133.6px" width="3.2" height="8" viewBox="0 0 3.2 8"><path d="M0.2 2.7 L1.6 1 L3 2.7 Z M0.2 5.3 L1.6 7 L3 5.3 Z" fill="#f0f0f4" stroke="#f0f0f4" stroke-width="0.3" stroke-linejoin="round"/></svg>
<svg style="left:830.8px;top:154.8px" width="3.2" height="8" viewBox="0 0 3.2 8"><path d="M0.2 2.7 L1.6 1 L3 2.7 Z M0.2 5.3 L1.6 7 L3 5.3 Z" fill="#f0f0f4" stroke="#f0f0f4" stroke-width="0.3" stroke-linejoin="round"/></svg>

<!-- ================= TIMELINE ================= -->
<div class="a" id="tt"></div>
<svg style="left:1.20px;top:287.50px" width="8" height="7" viewBox="0 0 8 7" fill="none" stroke="#e6e6ea" stroke-width="0.8" stroke-linecap="round" stroke-linejoin="round"><path d="M2.6 0.8 L0.8 2.6 L2.6 4.4 M0.8 2.6 H5 Q7.2 2.6 7.2 4.6 Q7.2 6.4 5 6.4 H3"/></svg>
<svg style="left:22.60px;top:287.50px" width="8" height="7" viewBox="0 0 8 7" fill="none" stroke="#4a4a52" stroke-width="0.8" stroke-linecap="round" stroke-linejoin="round"><path d="M5.4 0.8 L7.2 2.6 L5.4 4.4 M7.2 2.6 H3 Q0.8 2.6 0.8 4.6 Q0.8 6.4 3 6.4 H5"/></svg>
<svg style="left:44.00px;top:286.80px" width="8" height="8.4" viewBox="0 0 8 8.4" fill="none" stroke="#e6e6ea" stroke-width="0.8" stroke-linecap="round" stroke-linejoin="round"><path d="M0.7 2 H7.3 M2.8 2 V1 Q2.8 0.5 3.3 0.5 H4.7 Q5.2 0.5 5.2 1 V2 M1.5 2 V6.8 Q1.5 7.8 2.5 7.8 H5.5 Q6.5 7.8 6.5 6.8 V2 M3.2 3.8 V6 M4.8 3.8 V6"/></svg>
<div class="a" style="left:64.2px;top:287.6px;width:0.7px;height:7px;background:#4a4a52"></div>
<svg style="left:76.30px;top:287.00px" width="8.4" height="8" viewBox="0 0 8.4 8" fill="none" stroke="#e6e6ea" stroke-width="0.8" stroke-linecap="round" stroke-linejoin="round"><circle cx="1.9" cy="6.1" r="1.3"/><circle cx="6.5" cy="6.1" r="1.3"/><path d="M2.6 5 L6.4 0.6 M5.8 5 L2 0.6"/></svg>
<svg style="left:97.60px;top:286.80px" width="8.4" height="8.4" viewBox="0 0 8.4 8.4" fill="none" stroke="#e6e6ea" stroke-width="0.8" stroke-linecap="round" stroke-linejoin="round"><path d="M4.2 0.6 V7.8 M0.6 4.2 H7.8 M3 1.8 L4.2 0.6 L5.4 1.8 M3 6.6 L4.2 7.8 L5.4 6.6 M1.8 3 L0.6 4.2 L1.8 5.4 M6.6 3 L7.8 4.2 L6.6 5.4"/><circle cx="4.2" cy="4.2" r="0.8" fill="#e6e6ea" stroke="none"/></svg>
<svg style="left:119.20px;top:287.20px" width="8.6" height="7.6" viewBox="0 0 8.6 7.6" fill="none" stroke="#e6e6ea" stroke-width="0.8" stroke-linecap="round" stroke-linejoin="round"><path d="M1.6 6.8 A3.7 3.7 0 1 1 7 6.8"/><path d="M4.3 4.8 L5.8 2.6"/><circle cx="4.3" cy="4.8" r="0.6" fill="#e6e6ea" stroke="none"/></svg>
<svg style="left:140.80px;top:286.80px" width="8.4" height="8.4" viewBox="0 0 8.4 8.4" fill="none" stroke="#e6e6ea" stroke-width="0.9" stroke-linecap="round" stroke-linejoin="round"><path d="M2.2 0.6 V6.2 H7.8 M0.6 2.2 H6.2 V7.8"/></svg>
<svg style="left:162.30px;top:286.80px" width="8.4" height="8.4" viewBox="0 0 8.4 8.4" fill="none" stroke="#e6e6ea" stroke-width="0.8" stroke-linecap="round" stroke-linejoin="round"><rect x="0.7" y="0.7" width="7" height="7" rx="1.2"/><path d="M3 3 H5.6 V5.6 M5.6 3 L2.6 6"/><path d="M0.7 2.4 H2.2" /></svg>
<svg style="left:184.00px;top:286.80px" width="7.4" height="8.4" viewBox="0 0 7.4 8.4" fill="none" stroke="#e6e6ea" stroke-width="0.8" stroke-linecap="round" stroke-linejoin="round"><path d="M0.7 1 H6.7 V4.6 Q6.7 6.6 3.7 7.8 Q0.7 6.6 0.7 4.6 Z"/><path d="M2.8 3.6 H4.6" /></svg>
<svg style="left:204.60px;top:287.00px" width="8.8" height="8" viewBox="0 0 8.8 8" fill="none" stroke="#e6e6ea" stroke-width="0.7" stroke-linecap="round" stroke-linejoin="round"><path d="M4.4 0.5 V7.5"/><path d="M3.2 1.6 V6.6 H0.6 Z" fill="#e6e6ea"/><path d="M5.6 1.6 V6.6 H8.2 Z"/></svg>
<svg style="left:226.60px;top:286.80px" width="8" height="8.4" viewBox="0 0 8 8.4" fill="none" stroke="#e6e6ea" stroke-width="0.7" stroke-linecap="round" stroke-linejoin="round"><path d="M2.4 0.6 V7.8"/><path d="M2.4 1.6 H5.6 M2.4 3.4 H7.2 M2.4 5.2 H6.4 M2.4 7 H5"/><circle cx="1.6" cy="4.2" r="0.9" fill="#e6e6ea" stroke="none"/></svg>
<svg style="left:247.80px;top:287.00px" width="8" height="8" viewBox="0 0 8 8" fill="none" stroke="#3e3e46" stroke-width="0.7" stroke-linecap="round" stroke-linejoin="round"><circle cx="4" cy="4" r="3.3"/><circle cx="4" cy="4" r="1.2"/></svg>
<svg style="left:269.40px;top:286.80px" width="8.4" height="8.4" viewBox="0 0 8.4 8.4" fill="none" stroke="#e6e6ea" stroke-width="0.8" stroke-linecap="round" stroke-linejoin="round"><path d="M2.6 1.6 H1.7 Q0.7 1.6 0.7 2.6 V6.7 Q0.7 7.7 1.7 7.7 H6.7 Q7.7 7.7 7.7 6.7 V2.6 Q7.7 1.6 6.7 1.6 H5.8"/><path d="M2.8 0.6 H5.6 M3 3.4 H5.4 M4.2 3.4 V6"/></svg>
<div class="a" style="left:606px;top:285.4px;width:37.6px;height:11.2px;border-radius:2px;background:#2f2f36"></div>
<div class="t" style="left:606px;top:287.2px;width:37.6px;text-align:center;font-size:5.4px;color:#8e8e96">Auxiliary Line</div>
<svg style="left:673.30px;top:286.70px" width="6.4" height="8.6" viewBox="0 0 6.4 8.6" fill="none" stroke="#e6e6ea" stroke-width="0.7" stroke-linecap="round" stroke-linejoin="round"><rect x="2" y="0.5" width="2.4" height="4.6" rx="1.2" stroke-width="0.9"/><path d="M0.6 3.8 Q0.6 6.4 3.2 6.4 Q5.8 6.4 5.8 3.8 M3.2 6.4 V8 M2 8 H4.4" stroke-width="0.85"/></svg>
<div class="a" style="left:688.8px;top:287.6px;width:0.7px;height:7px;background:#4a4a52"></div>
<svg style="left:697.10px;top:288.50px" width="9" height="5" viewBox="0 0 9 5" fill="none" stroke="#e6e6ea" stroke-width="0.4" stroke-linecap="round" stroke-linejoin="round"><rect x="0.5" y="0.9" width="3.4" height="3.2" rx="0.7" fill="#e6e6ea"/><rect x="5.1" y="0.9" width="3.4" height="3.2" rx="0.7" fill="#e6e6ea"/><path d="M3.4 2.5 H5.6" stroke-width="1.1"/><rect x="1.5" y="1.8" width="1.4" height="1.4" fill="#25262e" stroke="none"/><rect x="6.1" y="1.8" width="1.4" height="1.4" fill="#25262e" stroke="none"/></svg>
<svg style="left:715.10px;top:288.00px" width="9" height="6" viewBox="0 0 9 6" fill="none" stroke="#e6e6ea" stroke-width="0.4" stroke-linecap="round" stroke-linejoin="round"><rect x="0.5" y="1.6" width="8" height="2.8" rx="0.8" fill="#e6e6ea"/><path d="M4.5 0.4 V5.6" stroke-width="1"/><path d="M4.5 1.6 V4.4" stroke="#26262c" stroke-width="0.5"/></svg>
<svg style="left:733.10px;top:288.50px" width="9" height="5" viewBox="0 0 9 5" fill="none" stroke="#e6e6ea" stroke-width="0.4" stroke-linecap="round" stroke-linejoin="round"><rect x="0.5" y="1" width="3.2" height="3" rx="0.7" fill="#e6e6ea"/><rect x="5.3" y="1" width="3.2" height="3" rx="0.7" fill="#e6e6ea"/><path d="M3.6 2.5 H5.4" stroke-width="0.7"/></svg>
<svg style="left:751.30px;top:287.50px" width="8.6" height="7" viewBox="0 0 8.6 7" fill="none" stroke="#e6e6ea" stroke-width="0.7" stroke-linecap="round" stroke-linejoin="round"><rect x="0.5" y="0.5" width="7.6" height="6" rx="1.6"/><path d="M2.2 3.5 H6.4 M2.8 2.7 L2 3.5 L2.8 4.3 M5.8 2.7 L6.6 3.5 L5.8 4.3"/></svg>
<svg style="left:769.40px;top:287.20px" width="7.6" height="7.6" viewBox="0 0 7.6 7.6" fill="none" stroke="#e6e6ea" stroke-width="0.7" stroke-linecap="round" stroke-linejoin="round"><circle cx="3.8" cy="3.8" r="3.3" stroke-width="0.85"/><path d="M2.5 3.8 H5.1" stroke-width="0.8"/></svg>
<div class="a" style="left:784px;top:290.6px;width:42.6px;height:0.9px;background:#55555d"></div>
<div class="a" style="left:782.8px;top:289px;width:4.2px;height:4.2px;border-radius:50%;background:#25262e;border:1px solid #f0f0f4"></div>
<svg style="left:832.20px;top:287.20px" width="7.6" height="7.6" viewBox="0 0 7.6 7.6" fill="none" stroke="#e6e6ea" stroke-width="0.7" stroke-linecap="round" stroke-linejoin="round"><circle cx="3.8" cy="3.8" r="3.3" stroke-width="0.85"/><circle cx="3.8" cy="3.8" r="1" fill="#e6e6ea" stroke="none"/></svg>
<div class="a" id="tl"></div>
<div class="a" id="tlc"></div>
<div class="a" style="left:68.8px;top:380.4px;width:776.7px;height:37.6px;background:#222228"></div>
<div class="a" style="left:0;top:380.4px;width:38.8px;height:37.6px;background:#222228;border-radius:0 2px 2px 0"></div>
<svg style="left:0;top:299.5px" width="850" height="14" viewBox="0 299.5 850 14"><path d="M68.6 311.2 H845.5" stroke="#0e0e13" stroke-width="1" fill="none"/><path d="M68.6 307.6 V311.8 M95.4 309 V311.6 M122.2 309 V311.6 M148.9 309 V311.6 M175.7 309 V311.6 M202.5 307.6 V311.8 M229.3 309 V311.6 M256.1 309 V311.6 M282.8 309 V311.6 M309.6 309 V311.6 M336.4 307.6 V311.8 M363.2 309 V311.6 M390.0 309 V311.6 M416.7 309 V311.6 M443.5 309 V311.6 M470.3 307.6 V311.8 M497.1 309 V311.6 M523.9 309 V311.6 M550.6 309 V311.6 M577.4 309 V311.6 M604.2 307.6 V311.8 M631.0 309 V311.6 M657.8 309 V311.6 M684.5 309 V311.6 M711.3 309 V311.6 M738.1 307.6 V311.8 M764.9 309 V311.6 M791.7 309 V311.6 M818.4 309 V311.6 M845.2 309 V311.6 " stroke="#383842" stroke-width="0.7" fill="none"/></svg>
<div class="t" style="left:68.6px;top:300.2px;font-size:5.2px;color:#4c4c56">30</div>
<div class="t" style="left:197.3px;top:300.2px;font-size:5.2px;color:#4c4c56">0:01</div>
<div class="t" style="left:331.2px;top:300.2px;font-size:5.2px;color:#4c4c56">0:02</div>
<div class="t" style="left:465.1px;top:300.2px;font-size:5.2px;color:#4c4c56">0:03</div>
<div class="t" style="left:599.0px;top:300.2px;font-size:5.2px;color:#4c4c56">0:04</div>
<div class="t" style="left:732.9px;top:300.2px;font-size:5.2px;color:#4c4c56">0:05</div>
<svg style="left:4.6px;top:361.4px" width="4.8" height="5.6" viewBox="0 0 4.8 5.6" fill="none" stroke="#a2a2aa" stroke-width="0.75"><rect x="0.5" y="0.5" width="3.8" height="4.6" rx="0.8"/><path d="M1.6 0.5 V5.1 M3.2 0.5 V5.1" stroke-width="0.45"/></svg>
<svg style="left:15.8px;top:362.0px" width="5.6" height="4.4" viewBox="0 0 5.6 4.4" fill="none" stroke="#a2a2aa" stroke-width="0.75"><path d="M0.4 2.2 Q2.8 -0.8 5.2 2.2 Q2.8 5.2 0.4 2.2 Z"/><circle cx="2.8" cy="2.2" r="0.8" fill="#a2a2aa" stroke="none"/></svg>
<svg style="left:27.4px;top:361.8px" width="5.8" height="4.8" viewBox="0 0 5.8 4.8" fill="none" stroke="#a2a2aa" stroke-width="0.75" stroke-linejoin="round"><path d="M0.5 1.6 H1.6 L3.2 0.5 V4.3 L1.6 3.2 H0.5 Z"/><path d="M4.2 1.2 Q5.4 2.4 4.2 3.6"/></svg>
<svg style="left:4.6px;top:396.4px" width="4.8" height="5.6" viewBox="0 0 4.8 5.6" fill="none" stroke="#a2a2aa" stroke-width="0.75"><rect x="0.5" y="0.5" width="3.8" height="4.6" rx="0.8"/><path d="M1.6 0.5 V5.1 M3.2 0.5 V5.1" stroke-width="0.45"/></svg>
<svg style="left:15.8px;top:397.0px" width="5.6" height="4.4" viewBox="0 0 5.6 4.4" fill="none" stroke="#a2a2aa" stroke-width="0.75"><path d="M0.4 2.2 Q2.8 -0.8 5.2 2.2 Q2.8 5.2 0.4 2.2 Z"/><circle cx="2.8" cy="2.2" r="0.8" fill="#a2a2aa" stroke="none"/></svg>
<svg style="left:27.4px;top:396.8px" width="5.8" height="4.8" viewBox="0 0 5.8 4.8" fill="none" stroke="#a2a2aa" stroke-width="0.75" stroke-linejoin="round"><path d="M0.5 1.6 H1.6 L3.2 0.5 V4.3 L1.6 3.2 H0.5 Z"/><path d="M4.2 1.2 Q5.4 2.4 4.2 3.6"/></svg>
<div class="a" style="left:44px;top:388.4px;width:22.6px;height:22px;border-radius:3.5px;background:#1f1f26"></div>
<svg style="left:49.4px;top:394px" width="11.4" height="11" viewBox="0 0 11.4 11" fill="none" stroke="#c4c4cc" stroke-width="0.85" stroke-linecap="round" stroke-linejoin="round"><path d="M6.6 9.6 H2.6 Q0.6 9.6 0.6 7.6 V2.8 Q0.6 0.8 2.6 0.8 H8 Q10 0.8 10 2.8 V5.4"/><circle cx="3.4" cy="3.6" r="0.9"/><path d="M0.8 8 Q3 5 5 6.4 Q6.6 4 8.6 4.6"/><path d="M9.2 7 V10.4 M7.5 8.7 H10.9"/></svg>
<div class="a" style="left:69.2px;top:350.4px;width:405.2px;height:28.8px;border-radius:2px;background:#5a39ae;overflow:hidden">
<svg style="left:0;top:0" width="405.2" height="28.4" viewBox="69.2 350.4 405.2 28.4"><defs><linearGradient id="pg" x1="0" y1="0" x2="0" y2="1"><stop offset="0" stop-color="#4a2fd0"/><stop offset="0.5" stop-color="#5e40ee"/><stop offset="1" stop-color="#6a4cf2"/></linearGradient></defs><rect x="69.2" y="350.4" width="405.2" height="20" fill="url(#pg)"/><use href="#cat" x="131.0" y="358.8" width="22.9" height="24.9"/><use href="#cat" x="170.6" y="351.4" width="22.9" height="24.9"/><use href="#cat" x="214.0" y="351.6" width="22.9" height="24.9"/><use href="#cat" x="256.0" y="351.8" width="22.9" height="24.9"/><use href="#cat" x="298.4" y="351.6" width="22.9" height="24.9"/><use href="#cat" x="341.0" y="352.6" width="22.9" height="24.9"/><path d="M344 350.4 Q352 352 360 351 Q368 350.8 372 356 Q374 362 379.4 362 L379.4 350.4 Z" fill="#f3b81a"/><rect x="379.4" y="350.4" width="44.2" height="20" fill="#f3b81a"/><rect x="423.6" y="350.4" width="51" height="20" fill="#6a4cf0"/><path d="M424 352 L440 350.4 L458 351 L466 356 L468 366 L452 370.4 L430 370.4 L424 362 Z" fill="#5b3ddc"/><path d="M426 362 L440 360 L452 364 L450 370.4 L428 370.4 Z" fill="#e8b820"/><path d="M430 364 L444 363 L446 366 L432 367 Z" fill="#e0455a"/><ellipse cx="447" cy="357" rx="3" ry="2.6" fill="#f3c428"/><ellipse cx="447" cy="357" rx="1.4" ry="1.2" fill="#3a5ad8"/><path d="M462 362 Q468 358 474.4 360 V370.4 H460 Z" fill="#8f74f5"/><rect x="69.2" y="370.2" width="405.2" height="8.6" fill="#5a39ae"/><path d="M128 378.8 L128.0 378.30 L129.1 378.28 L130.2 378.25 L131.3 378.23 L132.4 378.20 L133.5 378.18 L134.6 378.16 L135.7 378.13 L136.8 378.11 L137.9 378.09 L139.0 378.06 L140.1 378.04 L141.2 378.01 L142.3 377.99 L143.4 377.97 L144.5 377.94 L145.6 377.92 L146.7 377.90 L147.8 377.87 L148.9 377.85 L150.0 377.82 L151.1 377.80 L152.2 377.78 L153.3 377.75 L154.4 377.73 L155.5 377.71 L156.6 377.68 L157.7 377.66 L158.8 377.63 L159.9 377.61 L161.0 377.59 L162.1 377.56 L163.2 377.54 L164.3 377.52 L165.4 376.82 L166.5 376.43 L167.6 376.86 L168.7 376.73 L169.8 375.80 L170.9 376.88 L172.0 375.53 L173.1 376.56 L174.2 375.64 L175.3 376.83 L176.4 376.61 L177.5 376.92 L178.6 374.70 L179.7 375.92 L180.8 376.44 L181.9 376.45 L183.0 374.66 L184.1 374.58 L185.2 375.87 L186.3 376.50 L187.4 376.74 L188.5 377.13 L189.6 376.42 L190.7 376.24 L191.8 376.74 L192.9 376.61 L194.0 376.21 L195.1 374.62 L196.2 377.95 L197.3 377.61 L198.4 377.91 L199.5 377.85 L200.6 378.06 L201.7 378.18 L202.8 377.91 L203.9 378.11 L205.0 376.53 L206.1 375.76 L207.2 376.42 L208.3 375.37 L209.4 375.99 L210.5 376.83 L211.6 376.56 L212.7 374.97 L213.8 377.13 L214.9 375.24 L216.0 374.18 L217.1 376.72 L218.2 377.04 L219.3 375.97 L220.4 376.45 L221.5 377.11 L222.6 375.00 L223.7 375.96 L224.8 376.20 L225.9 375.78 L227.0 375.04 L228.1 376.66 L229.2 377.02 L230.3 374.05 L231.4 375.08 L232.5 375.08 L233.6 375.32 L234.7 374.10 L235.8 374.55 L236.9 375.20 L238.0 374.07 L239.1 373.80 L240.2 373.81 L241.3 375.64 L242.4 373.83 L243.5 375.13 L244.6 373.80 L245.7 373.80 L246.8 375.46 L247.9 374.90 L249.0 374.32 L250.1 375.73 L251.2 375.55 L252.3 376.96 L253.4 376.83 L254.5 376.55 L255.6 374.81 L256.7 376.27 L257.8 376.42 L258.9 376.38 L260.0 374.85 L261.1 375.28 L262.2 375.77 L263.3 376.41 L264.4 374.24 L265.5 376.25 L266.6 375.94 L267.7 374.48 L268.8 376.92 L269.9 375.67 L271.0 375.23 L272.1 374.78 L273.2 376.37 L274.3 376.97 L275.4 376.71 L276.5 376.23 L277.6 377.02 L278.7 375.48 L279.8 376.21 L280.9 376.58 L282.0 375.64 L283.1 377.16 L284.2 375.88 L285.3 375.78 L286.4 375.00 L287.5 376.53 L288.6 377.52 L289.7 378.17 L290.8 378.16 L291.9 378.08 L293.0 377.50 L294.1 377.70 L295.2 377.58 L296.3 377.57 L297.4 377.83 L298.5 377.91 L299.6 377.65 L300.7 375.91 L301.8 376.68 L302.9 376.99 L304.0 376.97 L305.1 376.34 L306.2 376.94 L307.3 376.78 L308.4 376.34 L309.5 377.20 L310.6 376.05 L311.7 376.35 L312.8 374.18 L313.9 376.71 L315.0 376.56 L316.1 376.64 L317.2 377.18 L318.3 375.81 L319.4 376.70 L320.5 376.62 L321.6 374.44 L322.7 373.80 L323.8 375.51 L324.9 376.83 L326.0 376.60 L327.1 376.84 L328.2 376.55 L329.3 376.22 L330.4 376.78 L331.5 376.42 L332.6 373.80 L333.7 376.67 L334.8 376.37 L335.9 377.05 L337.0 378.12 L338.1 378.21 L339.2 376.81 L340.3 377.98 L341.4 377.71 L342.5 377.63 L343.6 378.20 L344.7 375.77 L345.8 375.92 L346.9 374.96 L348.0 374.65 L349.1 376.67 L350.2 376.69 L351.3 376.27 L352.4 374.36 L353.5 373.80 L354.6 374.37 L355.7 373.83 L356.8 374.98 L357.9 373.80 L359.0 375.74 L360.1 374.21 L361.2 375.78 L362.3 375.71 L363.4 374.80 L364.5 375.79 L365.6 375.87 L366.7 373.80 L367.8 374.43 L368.9 375.56 L370.0 373.80 L371.1 374.28 L372.2 375.83 L373.3 376.80 L374.4 377.00 L375.5 376.14 L376.6 376.87 L377.7 376.24 L378.8 374.91 L379.9 374.94 L381.0 376.28 L382.1 375.76 L383.2 375.66 L384.3 374.99 L385.4 375.30 L386.5 376.08 L387.6 374.99 L388.7 375.79 L389.8 377.20 L390.9 375.49 L392.0 377.84 L393.1 377.41 L394.2 377.77 L395.3 377.42 L396.4 377.72 L397.5 378.15 L398.6 377.20 L399.7 377.50 L400.8 377.06 L401.9 376.30 L403.0 376.60 L404.1 376.59 L405.2 374.95 L406.3 375.67 L407.4 375.50 L408.5 374.97 L409.6 375.02 L410.7 376.93 L411.8 376.08 L412.9 375.67 L414.0 377.03 L415.1 377.01 L416.2 375.06 L417.3 376.80 L418.4 373.80 L419.5 376.62 L420.6 374.42 L421.7 375.97 L422.8 376.72 L423.9 376.28 L425.0 377.19 L426.1 375.95 L427.2 377.08 L428.3 375.21 L429.4 377.11 L430.5 375.64 L431.6 374.96 L432.7 374.79 L433.8 376.19 L434.9 375.88 L436.0 374.39 L437.1 375.57 L438.2 374.26 L439.3 375.60 L440.4 375.35 L441.5 377.18 L442.6 376.91 L443.7 377.16 L444.8 376.31 L445.9 376.85 L447.0 374.51 L448.1 377.13 L449.2 376.40 L450.3 375.70 L451.4 376.90 L452.5 374.11 L453.6 375.17 L454.7 374.39 L455.8 373.80 L456.9 375.10 L458.0 374.49 L459.1 374.81 L460.2 375.99 L461.3 374.79 L462.4 376.95 L463.5 375.43 L464.6 374.85 L465.7 376.24 L466.8 375.82 L467.9 376.35 L469.0 375.85 L470.1 376.04 L471.2 374.90 L472.3 377.02 L473.4 375.43 L474.4 378.8 Z" fill="#9686d6"/><rect x="70.8" y="353" width="157.4" height="8" rx="1.2" fill="rgba(40,24,120,.55)"/><rect x="74.6" y="354.2" width="5.8" height="5.6" rx="1.3" fill="#fff"/><path d="M76.6 355.6 V358.4 L78.9 357 Z" fill="#3a2a90"/></svg>
</div>
<div class="t" style="left:83.2px;top:353px;font-size:5.8px;color:#f4f4fa">0:03 (Animation) HitPaw - Create Unlimited Possibilities!</div>
<div class="a" style="left:68.8px;top:381px;width:406.0px;height:37px;border-radius:2.4px;background:#5a39a6;border:1px solid #f2f2f6;overflow:hidden">
<svg style="left:0;top:0" width="405.2" height="35" viewBox="0 0 405.2 35"><defs><symbol id="mini" viewBox="0 0 44.4 25" preserveAspectRatio="none"><rect width="44.4" height="25" fill="#fbfafc"/><path d="M0 0.6 H7 V2.4 H10.4 V5.4 H8 V6.6 H4.6 V4 H2 V2.6 H0 Z" fill="#7faaf8"/><path d="M24 1.6 H28 V3 H26 V4.2 H24 Z M31 0.8 H37.4 V3.8 H35 V6.2 H32 V3.2 H31 Z M37 7 H40 V9 H37 Z M41 2 H44 V4 H41 Z" fill="#f5a3c6"/><rect x="3.5" y="7.4" width="12.4" height="12.4" fill="#f7e6cf"/><rect x="3.2" y="6.6" width="2.2" height="1.4" fill="#111"/><rect x="9" y="10.6" width="2.4" height="1.6" fill="#7faaf8"/><path d="M17.6 6.2 Q17.4 2.6 20.6 2.2 Q24.2 2.4 24.4 6.6 L23.4 9 Q21 11.4 19.2 10 Q17.8 8.4 17.6 6.2 Z" fill="#e8bba4"/><path d="M17.4 6.6 Q16.6 2 20.8 1.6 Q25.2 1.8 25.2 6.4 Q26.6 6.8 26 8.4 L24.2 8.6 Q23.8 5.6 21.4 4.4 Q19 4.4 17.4 6.6 Z" fill="#4d3a2e"/><path d="M22.6 10.4 L25.4 9 Q29 10.4 29.6 15 Q30 20 29.4 25 L16.4 25 Q16 20.6 16.4 17.6 L19.4 18 Q20.6 14 22.6 10.4 Z" fill="#a6ccd6"/><path d="M16.6 17.8 Q16 14.6 17 12.4 L17.9 12.6 L18.4 15.2 Q20 16 19.4 18.4 Q18.4 19.6 17 19 Z" fill="#eab9a2"/><rect x="0" y="20.6" width="2" height="1.9" fill="#111"/><rect x="2" y="20.6" width="2.2" height="1.9" fill="#5fe8d6"/><rect x="2" y="22.5" width="2.2" height="1.9" fill="#111"/><rect x="4.2" y="22.5" width="3.8" height="1.9" fill="#5fe8d6"/><rect x="0" y="24.2" width="4.6" height="0.8" fill="#111"/><g stroke="#333" stroke-width="0.4" fill="none"><path d="M34 23.6 V20.4 Q34.6 19.4 35.2 20.4 V23.6 M36.2 23.6 V19.8 Q36.8 18.8 37.4 19.8 V23.6 M38.4 23.6 V20 Q39 19 39.6 20 V23.6 M40.6 23.6 V20.6 Q41.2 19.8 41.8 20.6 V23.6 M42.8 23.6 V21 Q43.3 20.4 43.8 21 V23.6"/></g></symbol></defs><rect x="0" y="0" width="2" height="24.9" fill="#fbfafc"/><use href="#mini" x="0.4" y="0" width="44.8" height="24.9"/><use href="#mini" x="45.0" y="0" width="44.8" height="24.9"/><use href="#mini" x="89.6" y="0" width="44.8" height="24.9"/><use href="#mini" x="134.2" y="0" width="44.8" height="24.9"/><use href="#mini" x="178.8" y="0" width="44.8" height="24.9"/><use href="#mini" x="223.4" y="0" width="44.8" height="24.9"/><use href="#mini" x="268.0" y="0" width="44.8" height="24.9"/><use href="#mini" x="312.6" y="0" width="44.8" height="24.9"/><use href="#mini" x="357.2" y="0" width="44.8" height="24.9"/><use href="#mini" x="401.8" y="0" width="44.8" height="24.9"/><rect x="0" y="24.9" width="405.2" height="10.6" fill="#5a39a6"/><rect x="1.6" y="1.9" width="72" height="8" rx="1.2" fill="rgba(70,70,76,.86)"/><rect x="5" y="3.1" width="5.8" height="5.6" rx="1.3" fill="#fff"/><path d="M7 4.5 V7.3 L9.3 5.9 Z" fill="#444"/></svg></div>
<div class="t" style="left:83px;top:383.9px;font-size:5.6px;color:#ececf0">0:03 20240313094942</div>
<div class="a" style="left:179.5px;top:305px;width:0.9px;height:153.4px;background:#d6d6da"></div>
<svg style="left:177.4px;top:300.8px" width="5.2" height="6.2" viewBox="0 0 5.2 6.2"><path d="M0.9 0 H4.3 Q5.2 0 5.2 0.9 V3.8 L2.6 6.2 L0 3.8 V0.9 Q0 0 0.9 0 Z" fill="#f4f4f8"/></svg>
<div class="a" style="left:175.4px;top:313px;width:10px;height:15.2px;border-radius:5px;background:#f4f4f8"></div>
<svg style="left:177.1px;top:315.8px" width="6.6" height="10.4" viewBox="0 0 6 10" fill="none" stroke="#22222a" stroke-width="0.7" stroke-linecap="round"><path d="M3 0.4 V1.4 M3 2 V2.6" stroke-width="0.45"/><circle cx="1.5" cy="7.8" r="1"/><circle cx="4.5" cy="7.8" r="1"/><path d="M2 7 L4.4 3.2 M4 7 L1.6 3.2"/></svg>

<!-- red annotation -->
<div class="a" style="left:594.5px;top:262px;width:15.2px;height:22px;border:1.7px solid #ee1c1c"></div>
<svg style="left:560px;top:278px" width="44" height="34" viewBox="560 278 44 34"><path d="M566.3 306.2 L589.3 284.4 L587.7 282.5 L596.6 280.4 L593.1 288.9 L591.5 287 Z" fill="#ee1c1c"/></svg>
<!-- bottom taskbar -->
<div class="a" style="left:0;top:459.6px;width:850px;height:2.2px;background:#0c0c10"></div>
<div class="a" style="left:0;top:461.7px;width:850px;height:4.3px;background:linear-gradient(90deg,#1f3a45 0%,#1f3a45 45%,#1c3048 70%,#1b2b4e 100%)"></div>
<div class="a" style="left:14px;top:462.5px;width:128.5px;height:3.5px;background:#f4f4f4"></div>
<div class="a" style="left:525.5px;top:461.9px;width:71.2px;height:4.1px;background:#4b5a6b"></div>
<div class="t" style="left:820.6px;top:464.9px;font-size:6px;color:#e8e8f0;font-weight:bold">16:15:09</div>
</div>
</body></html>
